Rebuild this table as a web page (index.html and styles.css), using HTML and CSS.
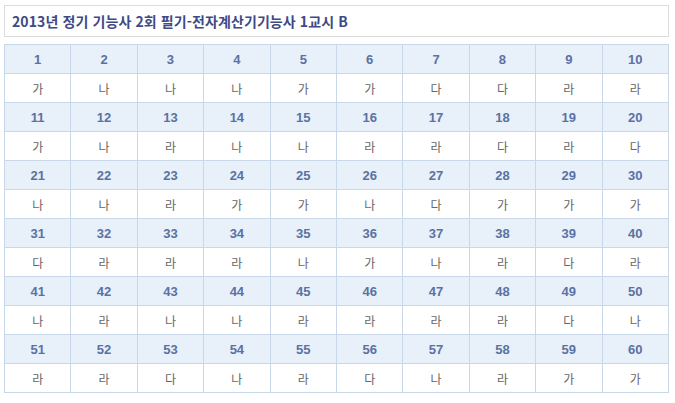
FILE: index.html
```html
<!DOCTYPE html>
<html lang="ko">
<head>
<meta charset="utf-8">
<link rel="stylesheet" href="styles.css">
</head>
<body>
<div class="title-box"><h1 class="title">2013년 정기 기능사 2회 필기-전자계산기기능사 1교시 B</h1></div>
<table class="answers">
<tr class="nums"><td>1</td><td>2</td><td>3</td><td>4</td><td>5</td><td>6</td><td>7</td><td>8</td><td>9</td><td>10</td></tr>
<tr class="ans"><td>가</td><td>나</td><td>나</td><td>나</td><td>가</td><td>가</td><td>다</td><td>다</td><td>라</td><td>라</td></tr>
<tr class="nums"><td>11</td><td>12</td><td>13</td><td>14</td><td>15</td><td>16</td><td>17</td><td>18</td><td>19</td><td>20</td></tr>
<tr class="ans"><td>가</td><td>나</td><td>라</td><td>나</td><td>나</td><td>라</td><td>라</td><td>다</td><td>라</td><td>다</td></tr>
<tr class="nums"><td>21</td><td>22</td><td>23</td><td>24</td><td>25</td><td>26</td><td>27</td><td>28</td><td>29</td><td>30</td></tr>
<tr class="ans"><td>나</td><td>나</td><td>라</td><td>가</td><td>가</td><td>나</td><td>다</td><td>가</td><td>가</td><td>가</td></tr>
<tr class="nums"><td>31</td><td>32</td><td>33</td><td>34</td><td>35</td><td>36</td><td>37</td><td>38</td><td>39</td><td>40</td></tr>
<tr class="ans"><td>다</td><td>라</td><td>라</td><td>라</td><td>나</td><td>가</td><td>나</td><td>라</td><td>다</td><td>라</td></tr>
<tr class="nums"><td>41</td><td>42</td><td>43</td><td>44</td><td>45</td><td>46</td><td>47</td><td>48</td><td>49</td><td>50</td></tr>
<tr class="ans"><td>나</td><td>라</td><td>나</td><td>나</td><td>라</td><td>라</td><td>라</td><td>라</td><td>다</td><td>나</td></tr>
<tr class="nums"><td>51</td><td>52</td><td>53</td><td>54</td><td>55</td><td>56</td><td>57</td><td>58</td><td>59</td><td>60</td></tr>
<tr class="ans"><td>라</td><td>라</td><td>다</td><td>나</td><td>라</td><td>다</td><td>나</td><td>라</td><td>가</td><td>가</td></tr>
</table>
</body>
</html>
```
FILE: styles.css
```css
html, body {
  margin: 0;
  padding: 0;
  background: #ffffff;
}
body {
  padding: 5px 0 0 4px;
  width: 665px;
  font-family: "Noto Sans CJK KR", "Noto Sans", sans-serif;
}
.title-box {
  border: 1px solid #dcdcdc;
  height: 30px;
  display: flex;
  align-items: center;
  padding-left: 7px;
}
.title {
  margin: 0;
  font-size: 14px;
  font-weight: bold;
  color: #3e4a86;
  letter-spacing: 0.1px;
}
.answers {
  margin-top: 7px;
  width: 665px;
  border-collapse: collapse;
  table-layout: fixed;
  border: 1px solid #c9d8e8;
}
.answers td {
  border: 1px solid #c9d8e8;
  height: 28px;
  padding: 0;
  text-align: center;
  font-size: 12px;
}
.nums td {
  background: #e8f0fa;
  color: #5a72a3;
  font-weight: bold;
  font-family: "Liberation Sans", sans-serif;
  font-size: 13px;
}
.ans td {
  background: #ffffff;
  color: #666666;
}
```
